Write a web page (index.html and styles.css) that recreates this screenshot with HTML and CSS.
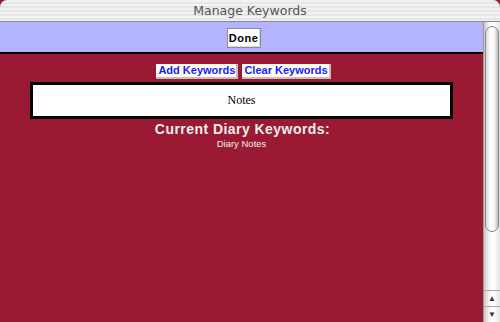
FILE: index.html
```html
<!DOCTYPE html>
<html>
	<head>
		<meta charset="utf8">
		<title>Manage Keywords</title>
		<link rel="stylesheet" href="styles.css">
	</head>
	<body>
		<div class="window">
			<div class="titlebar">Manage Keywords</div>
			<div class="main">
				<div class="content">
					<div class="toolbar">
						<button class="done">Done</button>
					</div>
					<div class="page">
						<div class="actions">
							<button class="kw">Add Keywords</button>
							<button class="kw">Clear Keywords</button>
						</div>
						<div class="notes">Notes</div>
						<div class="heading">Current Diary Keywords:</div>
						<div class="current">Diary Notes</div>
					</div>
				</div>
				<div class="scrollbar">
					<div class="track">
						<div class="thumb"></div>
					</div>
					<div class="arrow up">&#9650;</div>
					<div class="arrow down">&#9660;</div>
				</div>
			</div>
		</div>
	</body>
</html>
```
FILE: styles.css
```css
html,body{
	margin:0;
	padding:0;
	background:#9a1a33;
	font-family:"Liberation Sans",Arial,sans-serif;
}
.window{
	width:500px;
	height:322px;
	display:flex;
	flex-direction:column;
	overflow:hidden;
}
.titlebar{
	height:21px;
	line-height:22px;
	border-bottom:1px solid #8a8a8a;
	border-radius:7px 7px 0 0;
	background:repeating-linear-gradient(#f2f2f2 0px,#f2f2f2 2px,#e6e6e6 2px,#e6e6e6 4px);
	color:#555;
	font-family:"DejaVu Sans",sans-serif;
	font-size:12.5px;
	text-align:center;
}
.main{
	flex:1;
	display:flex;
	min-height:0;
}
.content{
	flex:1;
	display:flex;
	flex-direction:column;
}
.toolbar{
	height:30px;
	background:#b3b3ff;
	border-bottom:2px solid #000;
	display:flex;
	justify-content:center;
	align-items:center;
	padding-left:4px;
}
button{
	font-family:"Liberation Sans",Arial,sans-serif;
	font-weight:bold;
	cursor:pointer;
}
.done{
	width:34px;
	height:20px;
	margin-top:2px;
	padding:0;
	background:#fff;
	border:1px solid #8c8c8c;
	box-shadow:inset -1px -1px 0 #ddd;
	font-size:11px;
	color:#000;
	letter-spacing:0.5px;
}
.page{
	flex:1;
	background:#9a1a33;
	display:flex;
	flex-direction:column;
	align-items:center;
	padding-top:10px;
}
.actions{
	display:flex;
	gap:4px;
	margin-left:4px;
}
.kw{
	height:15px;
	padding:0 1px 0 2px;
	background:#ffffee;
	border:none;
	border-right:2px solid #c8c0b8;
	border-bottom:2px solid #c8c0b8;
	color:#1a1aff;
	font-size:11px;
	line-height:13px;
}
.notes{
	align-self:stretch;
	margin:3px 30px 0 30px;
	height:31px;
	border:3px solid #000;
	background:#fff;
	display:flex;
	align-items:center;
	justify-content:center;
	font-family:"Liberation Serif","Times New Roman",serif;
	font-size:12px;
	color:#000;
}
.heading{
	margin-top:2px;
	margin-left:2px;
	color:#eee;
	font-weight:bold;
	font-size:14px;
	line-height:17px;
	letter-spacing:0.45px;
}
.current{
	color:#eee;
	font-size:9.5px;
	line-height:11px;
}
.scrollbar{
	width:16px;
	display:flex;
	flex-direction:column;
	background:linear-gradient(90deg,#c8c8c8,#f4f4f4 30%,#fff 60%,#e4e4e4);
	border-left:1px solid #9a9a9a;
}
.track{
	flex:1;
	padding:4px 1px 0 1px;
}
.thumb{
	height:204px;
	border:1px solid #888;
	border-radius:8px;
	background:linear-gradient(90deg,#d8d8d8,#fff 40%,#f4f4f4 70%,#bbb);
}
.arrow{
	height:15px;
	border-top:1px solid #aaa;
	font-size:8px;
	line-height:15px;
	text-align:center;
	color:#333;
}
```
